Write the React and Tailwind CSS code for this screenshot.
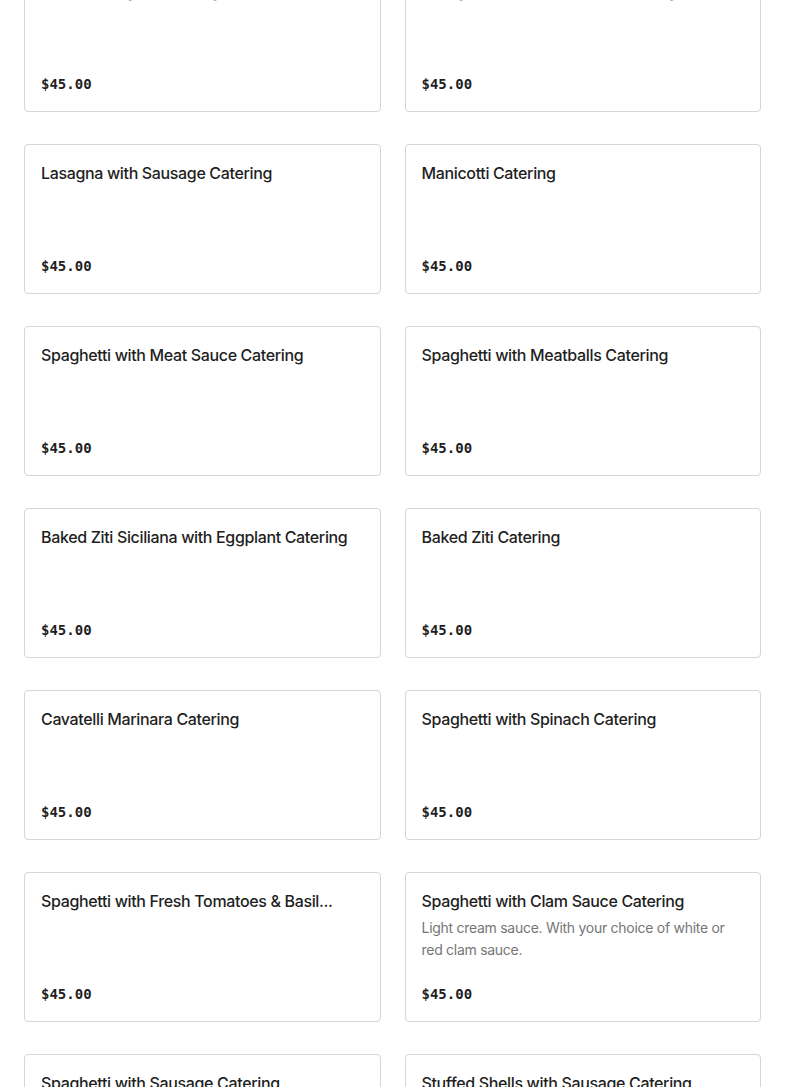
import React from "react";

const items = [
  { title: "Baked Lasagna Catering" },
  { title: "Lasagna with Meat Sauce Catering" },
  { title: "Lasagna with Sausage Catering" },
  { title: "Manicotti Catering" },
  { title: "Spaghetti with Meat Sauce Catering" },
  { title: "Spaghetti with Meatballs Catering" },
  { title: "Baked Ziti Siciliana with Eggplant Catering" },
  { title: "Baked Ziti Catering" },
  { title: "Cavatelli Marinara Catering" },
  { title: "Spaghetti with Spinach Catering" },
  { title: "Spaghetti with Fresh Tomatoes & Basil..." },
  {
    title: "Spaghetti with Clam Sauce Catering",
    desc: "Light cream sauce. With your choice of white or red clam sauce.",
  },
  { title: "Spaghetti with Sausage Catering" },
  { title: "Stuffed Shells with Sausage Catering" },
];

function Card({ title, desc }) {
  return (
    <div className="h-[150px] rounded border border-[#d6d6d6] bg-white p-4 flex flex-col">
      <div className="text-[16px] leading-6 font-medium tracking-[-0.35px] text-[#1f1f1f] whitespace-nowrap overflow-hidden">
        {title}
      </div>
      {desc && (
        <div className="mt-1 text-[14px] leading-[22px] tracking-[-0.28px] text-[#767676]">
          {desc}
        </div>
      )}
      <div className="flex-1" />
      <div
        className="text-[14px] leading-5 font-bold text-[#1f1f1f] -translate-y-px"
        style={{ fontFamily: '"DejaVu Sans Mono", "Liberation Mono", monospace' }}
      >
        $45.00
      </div>
    </div>
  );
}

export default function App() {
  return (
    <div
      className="w-[785px] h-[1087px] overflow-hidden bg-white"
      style={{ fontFamily: 'Inter, "Noto Sans", sans-serif' }}
    >
      <div className="-mt-[38px] px-6 grid grid-cols-2 gap-x-6 gap-y-8">
        {items.map((it, i) => (
          <Card key={i} {...it} />
        ))}
      </div>
    </div>
  );
}
